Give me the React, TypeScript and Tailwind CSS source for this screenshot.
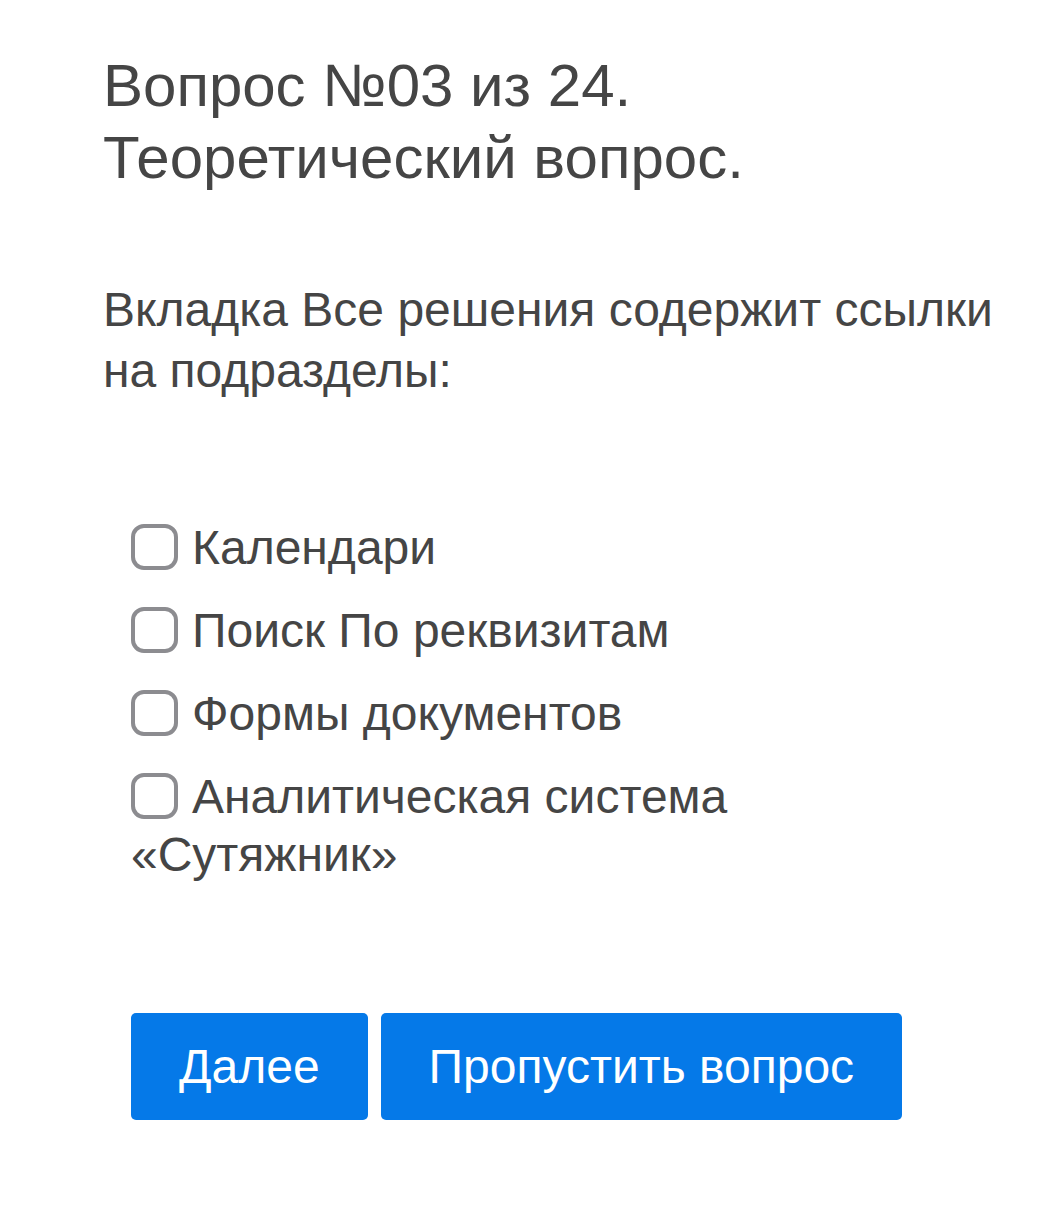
import React from "react";

const options = [
  "Календари",
  "Поиск По реквизитам",
  "Формы документов",
  "Аналитическая система «Сутяжник»",
];

function Option({ label }: { label: string }) {
  return (
    <label className="block text-[48px] leading-[58px] text-[#454545]">
      <span className="inline-block align-[-6px] mr-[14px] w-[47px] h-[46px] rounded-[13px] border-[4px] border-[#8c8c90] bg-white" />
      {label}
    </label>
  );
}

export default function App() {
  return (
    <div
      className="min-h-[1212px] bg-white text-[#454545] pl-[103px] pr-[36px] pt-[50px]"
      style={{ fontFamily: '"Liberation Sans", Arial, sans-serif' }}
    >
      <h1 className="text-[60px] leading-[72px] font-normal">
        Вопрос №03 из 24.
        <br />
        Теоретический вопрос.
      </h1>
      <p className="mt-[85px] text-[48px] leading-[61px]">
        Вкладка Все решения содержит ссылки на подразделы:
      </p>
      <div className="mt-[118px] pl-[28px] flex flex-col gap-[25px] max-w-[760px]">
        {options.map((o) => (
          <Option key={o} label={o} />
        ))}
      </div>
      <div className="mt-[129px] pl-[28px] flex gap-[13px]">
        <button className="h-[107px] px-[48px] rounded-[5px] bg-[#0579e8] text-white text-[48px]">
          Далее
        </button>
        <button className="h-[107px] px-[48px] rounded-[5px] bg-[#0579e8] text-white text-[48px]">
          Пропустить вопрос
        </button>
      </div>
    </div>
  );
}
